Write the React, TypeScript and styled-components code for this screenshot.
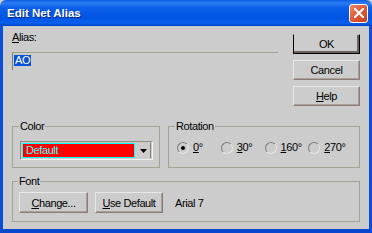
import * as React from "react";
import styled, { createGlobalStyle } from "styled-components";

const UI_FONT = `"Liberation Sans", Arial, sans-serif`;

const GlobalStyle = createGlobalStyle`
  html, body {
    margin: 0;
    padding: 0;
    background: #cccccc;
  }
  body {
    font-family: ${UI_FONT};
    font-size: 11px;
    letter-spacing: -0.4px;
    color: #000;
  }
`;

const ROTATIONS = ["0°", "30°", "160°", "270°"];

const App: React.FC = () => {
  const [rotation, setRotation] = React.useState(0);

  return (
    <>
      <GlobalStyle />
      <Window>
        <TitleBar>
          <Title>Edit Net Alias</Title>
          <CloseButton aria-label="Close">
            <svg width="10" height="10" viewBox="0 0 10 10">
              <path d="M1 1 L9 9 M9 1 L1 9" stroke="#fff" strokeWidth="2" strokeLinecap="square" />
            </svg>
          </CloseButton>
        </TitleBar>
        <Body>
          <TopSection>
            <AliasColumn>
              <Label>
                <u>A</u>lias:
              </Label>
              <TextField>
                <Selected>AO</Selected>
              </TextField>
            </AliasColumn>
            <ButtonColumn>
              <Button $isDefault>OK</Button>
              <Button>Cancel</Button>
              <Button>
                <u>H</u>elp
              </Button>
            </ButtonColumn>
          </TopSection>

          <GroupRow>
            <GroupBox $width={148}>
              <Legend>Color</Legend>
              <Combo>
                <ComboValue>Default</ComboValue>
                <ComboArrow>
                  <svg width="7" height="4" viewBox="0 0 7 4">
                    <path d="M0 0 H7 L3.5 4 Z" fill="#000" />
                  </svg>
                </ComboArrow>
              </Combo>
            </GroupBox>
            <GroupBox $width={192}>
              <Legend>Rotation</Legend>
              <RadioRow>
                {ROTATIONS.map((label, index) => (
                  <RadioItem key={label} onClick={() => setRotation(index)}>
                    <RadioCircle $checked={rotation === index} />
                    <span>
                      <u>{label.charAt(0)}</u>
                      {label.slice(1)}
                    </span>
                  </RadioItem>
                ))}
              </RadioRow>
            </GroupBox>
          </GroupRow>

          <FontGroup>
            <Legend>Font</Legend>
            <FontRow>
              <Button $width={69} $height={21}>
                <u>C</u>hange...
              </Button>
              <Button $width={68} $height={21}>
                <u>U</u>se Default
              </Button>
              <FontName>Arial 7</FontName>
            </FontRow>
          </FontGroup>
        </Body>
      </Window>
    </>
  );
};

export default App;

const Window = styled.div`
  width: 372px;
  height: 233px;
  display: flex;
  flex-direction: column;
  overflow: hidden;
  border-radius: 6px 6px 0 0;
`;

const TitleBar = styled.div`
  height: 26px;
  flex: none;
  display: flex;
  align-items: center;
  justify-content: space-between;
  padding: 0 4px 0 7px;
  box-sizing: border-box;
  background: linear-gradient(
    to bottom,
    #0a5ce6 0%,
    #2d7df4 12%,
    #0b5fe8 30%,
    #0054e3 70%,
    #0a61ee 88%,
    #0042c4 100%
  );
`;

const Title = styled.span`
  color: #fff;
  font-weight: bold;
  font-size: 11.5px;
  letter-spacing: 0;
  text-shadow: 1px 1px 0 #0a2a8a;
`;

const CloseButton = styled.div`
  width: 17px;
  height: 17px;
  border: 1px solid #fff;
  border-radius: 3px;
  display: flex;
  align-items: center;
  justify-content: center;
  background: linear-gradient(135deg, #e98a6c 0%, #dd5a36 50%, #c8401c 100%);
`;

const Body = styled.div`
  flex: 1;
  background: #cccccc;
  border-left: 3px solid #0a4fd8;
  border-right: 3px solid #0a4fd8;
  border-bottom: 4px solid #0849cf;
  padding: 0 9px;
  display: flex;
  flex-direction: column;
`;

const TopSection = styled.div`
  display: grid;
  grid-template-columns: 266px 67px;
  column-gap: 15px;
  height: 80px;
`;

const AliasColumn = styled.div`
  padding-top: 5px;
  display: flex;
  flex-direction: column;
`;

const Label = styled.div`
  line-height: 13px;
`;

const TextField = styled.div`
  margin-top: 8px;
  height: 18px;
  box-sizing: border-box;
  border-top: 1px solid #a3a291;
  border-left: 1px solid #7f7e70;
  padding: 2px 1px;
  line-height: 11px;
`;

const Selected = styled.span`
  background: #0b50d8;
  color: #fff;
  padding: 0 1px;
  display: inline-block;
  line-height: 11px;
`;

const ButtonColumn = styled.div`
  padding-top: 8px;
  display: flex;
  flex-direction: column;
  gap: 6px;
`;

const Button = styled.button<{ $isDefault?: boolean; $width?: number; $height?: number }>`
  width: ${(p) => p.$width ?? 67}px;
  height: ${(p) => p.$height ?? 20}px;
  padding: 0;
  margin: 0;
  background: #cccccc;
  font-family: ${UI_FONT};
  font-size: 11px;
  letter-spacing: -0.4px;
  color: #000;
  box-sizing: border-box;
  border: 1px solid;
  border-color: ${(p) =>
    p.$isDefault ? "#cccccc #000 #000 #000" : "#e8e8e8 #8a7c77 #8a7c77 #e8e8e8"};
  box-shadow: ${(p) =>
    p.$isDefault ? "inset -2px -2px 0 #6b615d" : "inset -1px -1px 0 #a8a09c"};
`;

const GroupRow = styled.div`
  margin-top: 14px;
  display: flex;
  gap: 8px;
`;

const GroupBox = styled.fieldset<{ $width: number }>`
  width: ${(p) => p.$width}px;
  height: 48px;
  box-sizing: border-box;
  margin: 0;
  padding: 0 7px;
  border: 1px solid #a5a494;
  min-width: 0;
`;

const FontGroup = styled.fieldset`
  margin: 7px 0 0 0;
  width: 348px;
  height: 47px;
  box-sizing: border-box;
  padding: 0 6px;
  border: 1px solid #a5a494;
  min-width: 0;
`;

const Legend = styled.legend`
  padding: 0 1px;
  margin-left: -1px;
  line-height: 13px;
  font-size: 11px;
`;

const Combo = styled.div`
  margin-top: 8px;
  width: 133px;
  height: 19px;
  box-sizing: border-box;
  display: flex;
  border: 1px solid;
  border-color: #8c8b7d #f2f2f2 #f2f2f2 #8c8b7d;
  padding: 1px;
  gap: 1px;
`;

const ComboValue = styled.div`
  flex: 1;
  background: #ff0000;
  border: 1px solid #00ffff;
  color: #40ffff;
  line-height: 13px;
  padding-left: 3px;
`;

const ComboArrow = styled.div`
  width: 14px;
  display: flex;
  align-items: center;
  justify-content: center;
  border-right: 1px solid #8a7c77;
`;

const RadioRow = styled.div`
  margin-top: 8px;
  margin-left: 1px;
  display: flex;
`;

const RadioItem = styled.label`
  width: 48px;
  display: flex;
  align-items: center;
  gap: 4px;
  line-height: 13px;
`;

const RadioCircle = styled.span<{ $checked: boolean }>`
  width: 12px;
  height: 12px;
  box-sizing: border-box;
  border-radius: 50%;
  border: 1px solid;
  border-color: #7b7b7b #e6e6e6 #e6e6e6 #7b7b7b;
  display: flex;
  align-items: center;
  justify-content: center;

  &::after {
    content: "";
    width: 4px;
    height: 4px;
    border-radius: 50%;
    background: ${(p) => (p.$checked ? "#000" : "transparent")};
  }
`;

const FontRow = styled.div`
  margin-top: 4px;
  display: flex;
  align-items: center;
  gap: 7px;
`;

const FontName = styled.span`
  margin-left: 5px;
`;
